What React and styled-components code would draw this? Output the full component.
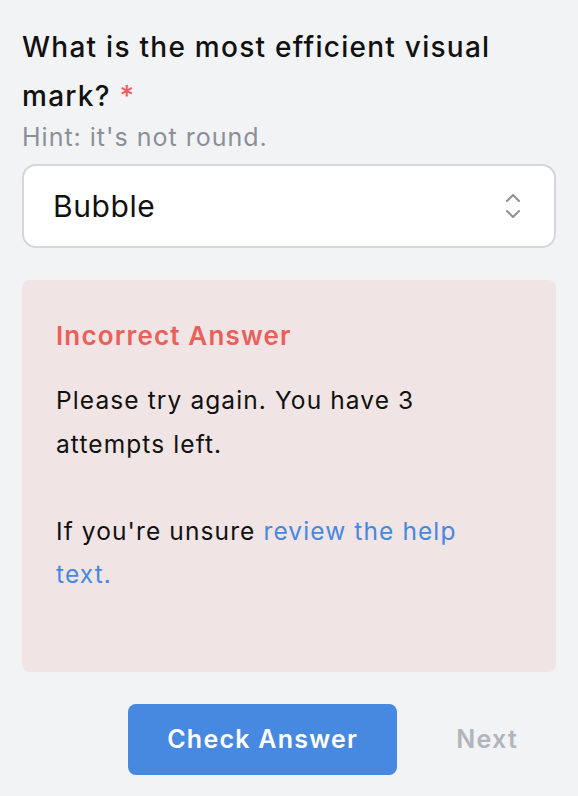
import React from "react";
import styled, { createGlobalStyle } from "styled-components";

const Global = createGlobalStyle`
  html, body { margin: 0; padding: 0; background: #f2f3f5; }
  body { font-family: Inter, "Noto Sans", sans-serif; -webkit-font-smoothing: antialiased; }
`;

const Page = styled.div`
  padding: 23px 22px 20px;
  display: flex;
  flex-direction: column;
`;

const Question = styled.div`
  font-size: 28px;
  line-height: 49px;
  font-weight: 500;
  color: #111;
  letter-spacing: 0.045em;
  padding-right: 60px;
`;

const Required = styled.span`
  color: #e8605c;
`;

const Hint = styled.div`
  font-size: 25px;
  line-height: 32px;
  color: #8b9098;
  letter-spacing: 0.04em;
`;

const SelectBox = styled.div`
  margin-top: 11px;
  height: 84px;
  box-sizing: border-box;
  background: #fff;
  border: 2px solid #d3d6db;
  border-radius: 14px;
  display: flex;
  align-items: center;
  justify-content: space-between;
  padding: 0 32px 0 29px;
  font-size: 30px;
  color: #111;
  letter-spacing: 0.02em;
`;

const Alert = styled.div`
  margin-top: 32px;
  background: #f0e4e4;
  border-radius: 8px;
  padding: 40px 50px 75px 34px;
`;

const AlertTitle = styled.div`
  color: #e8605c;
  font-weight: 600;
  font-size: 26px;
  line-height: 32px;
  letter-spacing: 0.045em;
`;

const AlertBody = styled.p`
  margin: 27px 0 0;
  font-size: 24.5px;
  line-height: 43.5px;
  color: #111;
  letter-spacing: 0.045em;
`;

const Link = styled.a`
  color: #4788e0;
  text-decoration: none;
`;

const Actions = styled.div`
  margin-top: 32px;
  display: flex;
  justify-content: flex-end;
  gap: 21px;
`;

const Button = styled.button`
  height: 71px;
  padding: 0 ${(p) => (p.$primary ? "39px" : "38px")};
  border: none;
  border-radius: 8px;
  font-family: inherit;
  font-size: 25px;
  font-weight: 600;
  letter-spacing: 0.05em;
  background: ${(p) => (p.$primary ? "#4788e0" : "transparent")};
  color: ${(p) => (p.$primary ? "#fff" : "#b0b5bb")};
  cursor: pointer;
`;

const Chevrons = () => (
  <svg width="18" height="28" viewBox="0 0 18 28" fill="none" stroke="#8b9098" strokeWidth="2" strokeLinecap="round" strokeLinejoin="round">
    <path d="M3 9 L9 3 L15 9" />
    <path d="M3 19 L9 25 L15 19" />
  </svg>
);

export default function App() {
  return (
    <>
      <Global />
      <Page>
        <Question>
          What is the most efficient visual mark? <Required>*</Required>
        </Question>
        <Hint>Hint: it's not round.</Hint>
        <SelectBox>
          <span>Bubble</span>
          <Chevrons />
        </SelectBox>
        <Alert>
          <AlertTitle>Incorrect Answer</AlertTitle>
          <AlertBody>
            Please try again. You have 3 attempts left.
            <br />
            <br />
            If you're unsure <Link href="#">review the help text.</Link>
          </AlertBody>
        </Alert>
        <Actions>
          <Button $primary>Check Answer</Button>
          <Button>Next</Button>
        </Actions>
      </Page>
    </>
  );
}
